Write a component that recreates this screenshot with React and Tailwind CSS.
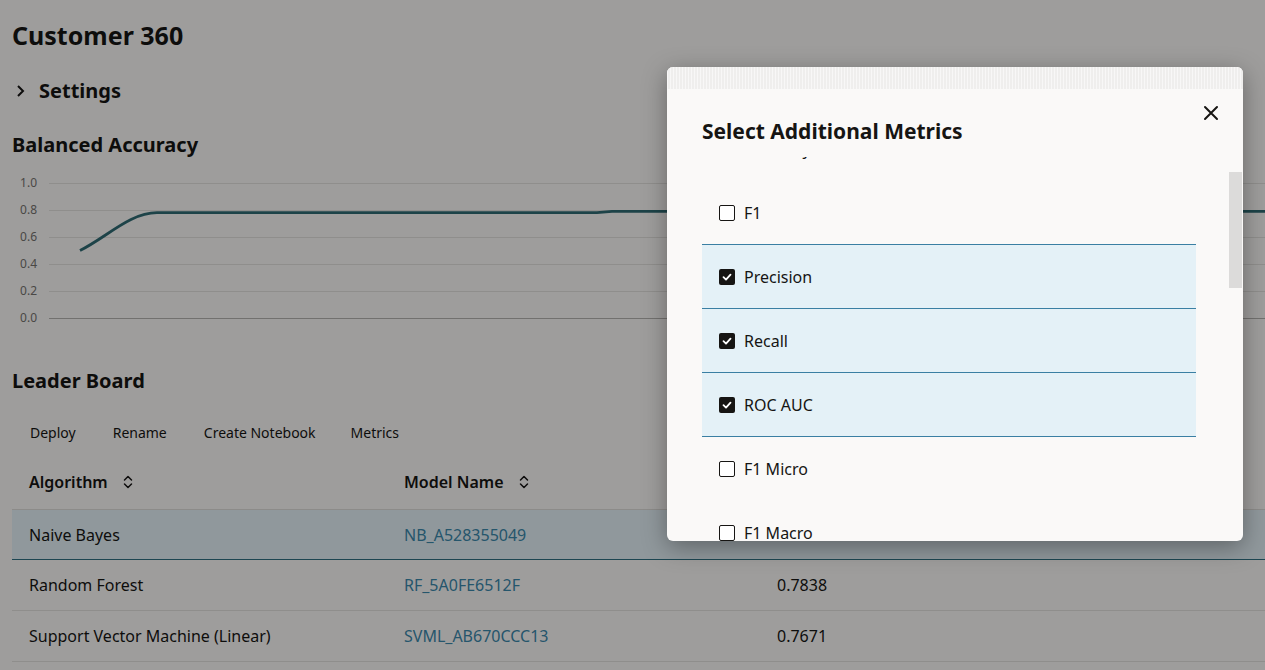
import React from "react";

const font = { fontFamily: '"Noto Sans", "Open Sans", sans-serif' };

function SortIcon() {
  return (
    <svg width="12" height="16" viewBox="0 0 12 16" fill="none" stroke="#161513" strokeWidth="1.5" strokeLinecap="round" strokeLinejoin="round">
      <path d="M2.5 6 L6 2.5 L9.5 6" />
      <path d="M2.5 10 L6 13.5 L9.5 10" />
    </svg>
  );
}

function Checkbox({ checked }) {
  return checked ? (
    <span className="flex h-4 w-4 items-center justify-center rounded-[2px] bg-[#161513]">
      <svg width="12" height="12" viewBox="0 0 12 12" fill="none" stroke="#ffffff" strokeWidth="1.8" strokeLinecap="round" strokeLinejoin="round">
        <path d="M2.5 6.2 L5 8.6 L9.5 3.6" />
      </svg>
    </span>
  ) : (
    <span className="block h-4 w-4 rounded-[2px] border-[1.5px] border-[#161513] bg-white" />
  );
}

function Chart() {
  const ys = [1.0, 0.8, 0.6, 0.4, 0.2, 0.0];
  const y = (v) => 318 - v * 135 - 175;
  return (
    <div className="relative h-[155px] w-full">
      <svg className="absolute inset-0" width="1253" height="155">
        {ys.map((v) => (
          <g key={v}>
            <line x1="37" x2="1253" y1={y(v) + 0.5} y2={y(v) + 0.5} stroke={v === 0 ? "#b5b3b0" : "#e3e1de"} strokeWidth="1" />
            <text x="25" y={y(v) + 4} textAnchor="end" fontSize="12" fill="#75736f" style={font}>
              {v.toFixed(1)}
            </text>
          </g>
        ))}
        <path
          d={`M68 ${y(0.5)} C 95 ${y(0.6)}, 118 ${y(0.78)}, 145 ${y(0.78)} L 585 ${y(0.78)} L 600 ${y(0.79)} L 1253 ${y(0.79)}`}
          fill="none"
          stroke="#2f6a73"
          strokeWidth="2.8"
        />
      </svg>
    </div>
  );
}

const rows = [
  { alg: "Naive Bayes", model: "NB_A528355049", score: "", selected: true },
  { alg: "Random Forest", model: "RF_5A0FE6512F", score: "0.7838" },
  { alg: "Support Vector Machine (Linear)", model: "SVML_AB670CCC13", score: "0.7671" },
];

const metrics = [
  { name: "Accuracy", checked: false },
  { name: "F1", checked: false },
  { name: "Precision", checked: true },
  { name: "Recall", checked: true },
  { name: "ROC AUC", checked: true },
  { name: "F1 Micro", checked: false },
  { name: "F1 Macro", checked: false },
];

export default function App() {
  return (
    <div className="relative h-[670px] w-[1265px] overflow-hidden bg-[#fbf9f8] text-[#161513]" style={font}>
      <div className="pl-3">
        <h1 className="pt-[19px] text-[25px] font-bold leading-[32px]">Customer 360</h1>
        <div className="mt-[27px] flex items-center">
          <svg width="12" height="14" viewBox="0 0 12 14" fill="none" stroke="#161513" strokeWidth="2" className="ml-[3px]">
            <path d="M3 2 L8 7 L3 12" />
          </svg>
          <span className="ml-[12px] text-[20px] font-bold leading-[26px]">Settings</span>
        </div>
        <h2 className="mt-[28px] text-[20px] font-bold leading-[26px]">Balanced Accuracy</h2>
        <div className="mt-[17px]">
          <Chart />
        </div>
        <h2 className="mt-[38px] text-[20px] font-bold leading-[26px]">Leader Board</h2>
        <div className="mt-[22px] flex items-center text-[14px] font-normal">
          <button className="px-[18px] py-[6px]">Deploy</button>
          <button className="px-[19px] py-[6px]">Rename</button>
          <button className="px-[18px] py-[6px]">Create Notebook</button>
          <button className="px-[17px] py-[6px]">Metrics</button>
        </div>
        <div className="mt-[6px]">
          <div className="grid h-[55px] grid-cols-[375px_373px_1fr] items-center border-b border-[#dedcd9] text-[16px] font-semibold">
            <div className="flex items-center gap-[14px] pl-[17px]">
              Algorithm <SortIcon />
            </div>
            <div className="flex items-center gap-[14px] pl-[17px]">
              Model Name <SortIcon />
            </div>
            <div className="pl-[17px]">Score</div>
          </div>
          {rows.map((r) => (
            <div
              key={r.alg}
              className={`grid grid-cols-[375px_373px_1fr] items-center border-b text-[16px] ${
                r.selected ? "h-[50px] border-[#2f6f82] bg-[#e4f1f7]" : "h-[51px] border-[#e3e1de]"
              }`}
            >
              <div className="pl-[17px]">{r.alg}</div>
              <div className="pl-[17px] text-[#3b88ab]">{r.model}</div>
              <div className="pl-[17px]">{r.score}</div>
            </div>
          ))}
        </div>
      </div>

      <div className="absolute inset-0 bg-black/[0.37]" />

      <div className="absolute left-[667px] top-[67px] flex h-[474px] w-[576px] flex-col overflow-hidden rounded-[6px] bg-[#faf9f8] shadow-[0_6px_24px_rgba(0,0,0,0.35)]">
        <div className="h-[22px] shrink-0 bg-[#efeeed] bg-[repeating-linear-gradient(90deg,rgba(255,255,255,0.55)_0px,rgba(255,255,255,0.55)_1px,transparent_1px,transparent_3px)]" />
        <div className="relative flex h-[68px] shrink-0 items-end pl-[35px] pb-[13px]">
          <h2 className="text-[21px] font-bold leading-[26px]">Select Additional Metrics</h2>
          <button className="absolute right-[22px] top-[14px] flex h-[20px] w-[20px] items-center justify-center">
            <svg width="16" height="16" viewBox="0 0 16 16" stroke="#161513" strokeWidth="2" strokeLinecap="round">
              <path d="M2 2 L14 14 M14 2 L2 14" />
            </svg>
          </button>
        </div>
        <div className="relative min-h-0 flex-1 overflow-hidden">
          <div className="-mt-[40px] ml-[35px] w-[494px]">
            {metrics.map((m) => (
              <div
                key={m.name}
                className={`flex h-[64px] items-center gap-[9px] pl-[17px] text-[16px] ${
                  m.checked || m.name === "F1" ? "border-b border-[#3a7fa3]" : ""
                } ${m.checked ? "bg-[#e4f1f7]" : ""}`}
              >
                <Checkbox checked={m.checked} />
                <span>{m.name}</span>
              </div>
            ))}
          </div>
          <div className="absolute right-[1px] top-[15px] h-[116px] w-[13px] bg-[#dcdbda]" />
        </div>
      </div>
    </div>
  );
}
